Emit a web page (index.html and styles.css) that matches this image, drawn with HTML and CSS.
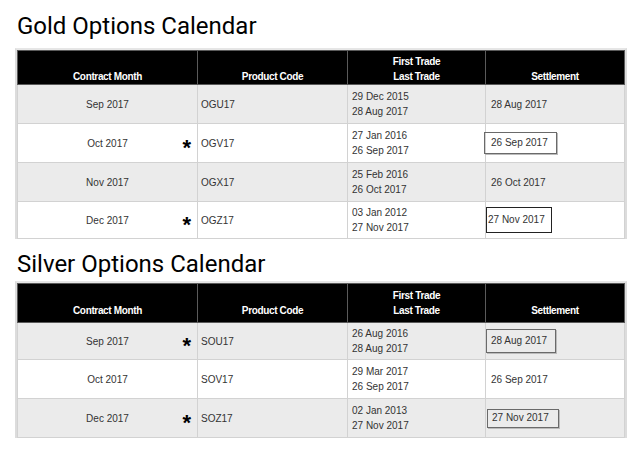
FILE: index.html
```html
<!DOCTYPE html>
<html>
<head>
<meta charset="utf-8">
<link rel="stylesheet" href="styles.css">
</head>
<body>
<h2 class="title title-gold">Gold Options Calendar</h2>
<div class="frame">
<table class="cal">
  <colgroup><col class="c1"><col class="c2"><col class="c3"><col class="c4"></colgroup>
  <thead>
    <tr class="head head-gold"><th>Contract Month</th><th>Product Code</th><th>First Trade<br>Last Trade</th><th>Settlement</th></tr>
  </thead>
  <tbody>
    <tr class="odd"><td class="month"><div class="mwrap"><span class="mtext">Sep 2017</span></div></td><td>OGU17</td><td>29 Dec 2015<br>28 Aug 2017</td><td>28 Aug 2017</td></tr>
    <tr class="even"><td class="month"><div class="mwrap"><span class="mtext">Oct 2017</span><span class="star">*</span></div></td><td>OGV17</td><td>27 Jan 2016<br>26 Sep 2017</td><td><span class="box box-a">26 Sep 2017</span></td></tr>
    <tr class="odd"><td class="month"><div class="mwrap"><span class="mtext">Nov 2017</span></div></td><td>OGX17</td><td>25 Feb 2016<br>26 Oct 2017</td><td>26 Oct 2017</td></tr>
    <tr class="even last"><td class="month"><div class="mwrap"><span class="mtext">Dec 2017</span><span class="star">*</span></div></td><td>OGZ17</td><td>03 Jan 2012<br>27 Nov 2017</td><td><span class="box box-b">27 Nov 2017</span></td></tr>
  </tbody>
</table>
</div>

<h2 class="title title-silver">Silver Options Calendar</h2>
<div class="frame">
<table class="cal">
  <colgroup><col class="c1"><col class="c2"><col class="c3"><col class="c4"></colgroup>
  <thead>
    <tr class="head head-silver"><th>Contract Month</th><th>Product Code</th><th>First Trade<br>Last Trade</th><th>Settlement</th></tr>
  </thead>
  <tbody>
    <tr class="odd short"><td class="month"><div class="mwrap"><span class="mtext">Sep 2017</span><span class="star">*</span></div></td><td>SOU17</td><td>26 Aug 2016<br>28 Aug 2017</td><td><span class="box box-c">28 Aug 2017</span></td></tr>
    <tr class="even"><td class="month"><div class="mwrap"><span class="mtext">Oct 2017</span></div></td><td>SOV17</td><td>29 Mar 2017<br>26 Sep 2017</td><td>26 Sep 2017</td></tr>
    <tr class="odd"><td class="month"><div class="mwrap"><span class="mtext">Dec 2017</span><span class="star">*</span></div></td><td>SOZ17</td><td>02 Jan 2013<br>27 Nov 2017</td><td><span class="box box-d">27 Nov 2017</span></td></tr>
  </tbody>
</table>
</div>
</body>
</html>
```

FILE: styles.css
```css
html, body {
  margin: 0;
  padding: 0;
  background: #fff;
}

.title {
  font-family: Roboto, "Liberation Sans", sans-serif;
  font-weight: 400;
  font-size: 24px;
  line-height: 28px;
  color: #000;
  margin: 0;
  padding-left: 17px;
}

.title-gold {
  margin-top: 12px;
  margin-bottom: 8px;
}

.title-silver {
  margin-top: 11px;
  margin-bottom: 3px;
}

.frame {
  margin-left: 15px;
  width: 607px;
  border-left: 2px solid #dcdcdc;
  border-right: 3px solid #dcdcdc;
  border-top: 2px solid #e6e6e6;
}

.cal {
  width: 607px;
  border-collapse: collapse;
  table-layout: fixed;
  font-family: "Liberation Sans", Arial, sans-serif;
  font-size: 10px;
  color: #333;
}

.c1 { width: 180px; }
.c2 { width: 150px; }
.c3 { width: 138px; }
.c4 { width: 139px; }

.head th {
  background: #000;
  color: #fff;
  font-weight: 700;
  font-size: 10px;
  letter-spacing: -0.35px;
  line-height: 15px;
  vertical-align: bottom;
  text-align: center;
  border: 1px solid #5a5a5a;
  padding: 0;
}

.head-gold th { height: 33px; }
.head-silver th { height: 34px; padding-bottom: 4px; }

.cal td {
  border: 1px solid #d2d2d2;
  height: 38px;
  padding: 0 0 0 3px;
  line-height: 15px;
  vertical-align: middle;
  text-align: left;
}

.cal td + td + td { padding-left: 4px; }
.cal td + td + td + td { padding-left: 5px; }

.odd td { background: #ebebeb; }
.even td { background: #fff; }
.last td { height: 36px; }
.short td { height: 36px; }

.cal td.month {
  padding: 0;
}

.mwrap {
  display: grid;
  grid-template-columns: 1fr auto 1fr;
  align-items: center;
}

.mtext {
  grid-column: 2;
}

.star {
  grid-column: 3;
  justify-self: end;
  margin-right: 6px;
  font-size: 22px;
  font-weight: 700;
  color: #000;
  line-height: 15px;
  position: relative;
  top: 4px;
}

.box {
  display: inline-block;
  border: 1px solid #6a6a6a;
  box-shadow: 1px 1px 0 #bbb;
  line-height: 14px;
}

.box-a { padding: 3px 8px 3px 6px; margin-left: -7px; }
.box-b { padding: 5px 6px 5px 1px; border-color: #222; box-shadow: none; margin-left: -5px; }
.box-c { padding: 4px 8px 4px 4px; margin-left: -5px; }
.box-d { padding: 1px 9px 2px 4px; margin-left: -4px; }
```
